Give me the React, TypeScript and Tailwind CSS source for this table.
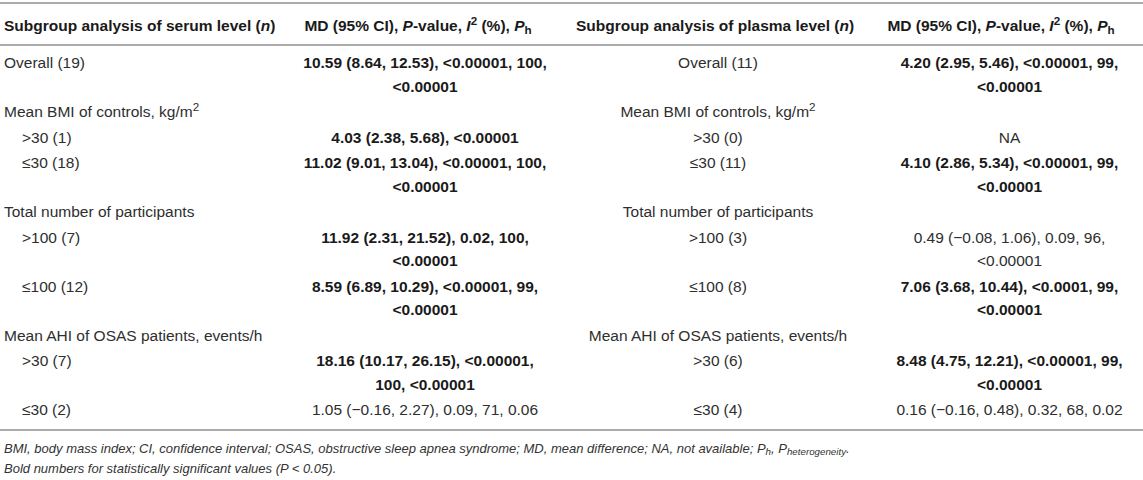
import type { ReactNode } from 'react';

type Row = {
  left: ReactNode;
  indent?: boolean;
  serum?: string[];
  serumBold?: boolean;
  right: ReactNode;
  plasma?: string[];
  plasmaBold?: boolean;
};

const rows: Row[] = [
  {
    left: 'Overall (19)',
    serum: ['10.59 (8.64, 12.53), <0.00001, 100,', '<0.00001'],
    serumBold: true,
    right: 'Overall (11)',
    plasma: ['4.20 (2.95, 5.46), <0.00001, 99,', '<0.00001'],
    plasmaBold: true,
  },
  {
    left: (
      <>
        Mean BMI of controls, kg/m<sup>2</sup>
      </>
    ),
    right: (
      <>
        Mean BMI of controls, kg/m<sup>2</sup>
      </>
    ),
  },
  {
    left: '>30 (1)',
    indent: true,
    serum: ['4.03 (2.38, 5.68), <0.00001'],
    serumBold: true,
    right: '>30 (0)',
    plasma: ['NA'],
  },
  {
    left: '≤30 (18)',
    indent: true,
    serum: ['11.02 (9.01, 13.04), <0.00001, 100,', '<0.00001'],
    serumBold: true,
    right: '≤30 (11)',
    plasma: ['4.10 (2.86, 5.34), <0.00001, 99,', '<0.00001'],
    plasmaBold: true,
  },
  { left: 'Total number of participants', right: 'Total number of participants' },
  {
    left: '>100 (7)',
    indent: true,
    serum: ['11.92 (2.31, 21.52), 0.02, 100,', '<0.00001'],
    serumBold: true,
    right: '>100 (3)',
    plasma: ['0.49 (−0.08, 1.06), 0.09, 96,', '<0.00001'],
  },
  {
    left: '≤100 (12)',
    indent: true,
    serum: ['8.59 (6.89, 10.29), <0.00001, 99,', '<0.00001'],
    serumBold: true,
    right: '≤100 (8)',
    plasma: ['7.06 (3.68, 10.44), <0.0001, 99,', '<0.00001'],
    plasmaBold: true,
  },
  { left: 'Mean AHI of OSAS patients, events/h', right: 'Mean AHI of OSAS patients, events/h' },
  {
    left: '>30 (7)',
    indent: true,
    serum: ['18.16 (10.17, 26.15), <0.00001,', '100, <0.00001'],
    serumBold: true,
    right: '>30 (6)',
    plasma: ['8.48 (4.75, 12.21), <0.00001, 99,', '<0.00001'],
    plasmaBold: true,
  },
  {
    left: '≤30 (2)',
    indent: true,
    serum: ['1.05 (−0.16, 2.27), 0.09, 71, 0.06'],
    right: '≤30 (4)',
    plasma: ['0.16 (−0.16, 0.48), 0.32, 68, 0.02'],
  },
];

const gridCols = 'grid grid-cols-[290px_270px_316px_267px]';

function Lines({ lines, bold }: { lines?: string[]; bold?: boolean }) {
  if (!lines) return <div />;
  return (
    <div className={`text-center whitespace-nowrap ${bold ? 'font-bold text-[#1a1a1a]' : ''}`}>
      {lines.map((l, i) => (
        <div key={i}>{l}</div>
      ))}
    </div>
  );
}

function MdHeader() {
  return (
    <>
      MD (95% CI), <i>P</i>-value, <i>I</i>
      <sup>2</sup> (%), <i>P</i>
      <sub>h</sub>
    </>
  );
}

export default function App() {
  return (
    <div className="w-[1143px] h-[480px] bg-white pt-[2px] font-['Liberation_Sans',Arial,sans-serif] text-[15.5px] text-[#2e2e2e]">
      <div className={`${gridCols} h-[42px] pt-[3px] border-t-2 border-[#ababab] items-center font-bold text-[#1a1a1a]`}>
        <div className="pl-1 whitespace-nowrap">
          Subgroup analysis of serum level (<i>n</i>)
        </div>
        <div className="text-center whitespace-nowrap pr-[14px]">
          <MdHeader />
        </div>
        <div className="text-center whitespace-nowrap pr-[6px]">
          Subgroup analysis of plasma level (<i>n</i>)
        </div>
        <div className="text-center whitespace-nowrap pr-[17px]">
          <MdHeader />
        </div>
      </div>

      <div className="border-t-2 border-[#ababab] pt-[4px] pb-[6px] leading-[23.5px]">
        {rows.map((r, i) => (
          <div key={i} className={`${gridCols} py-[1px]`}>
            <div className={`whitespace-nowrap ${r.indent ? 'pl-[22px]' : 'pl-1'}`}>{r.left}</div>
            <Lines lines={r.serum} bold={r.serumBold} />
            <div className="text-center whitespace-nowrap">{r.right}</div>
            <Lines lines={r.plasma} bold={r.plasmaBold} />
          </div>
        ))}
      </div>

      <div className="border-t-2 border-[#ababab] pt-[8px] pl-1 italic text-[13px] leading-[20px] text-[#333]">
        <div>
          BMI, body mass index; CI, confidence interval; OSAS, obstructive sleep apnea syndrome; MD, mean
          difference; NA, not available; P<sub>h</sub>, P<sub>heterogeneity</sub>.
        </div>
        <div>Bold numbers for statistically significant values (P &lt; 0.05).</div>
      </div>
    </div>
  );
}
